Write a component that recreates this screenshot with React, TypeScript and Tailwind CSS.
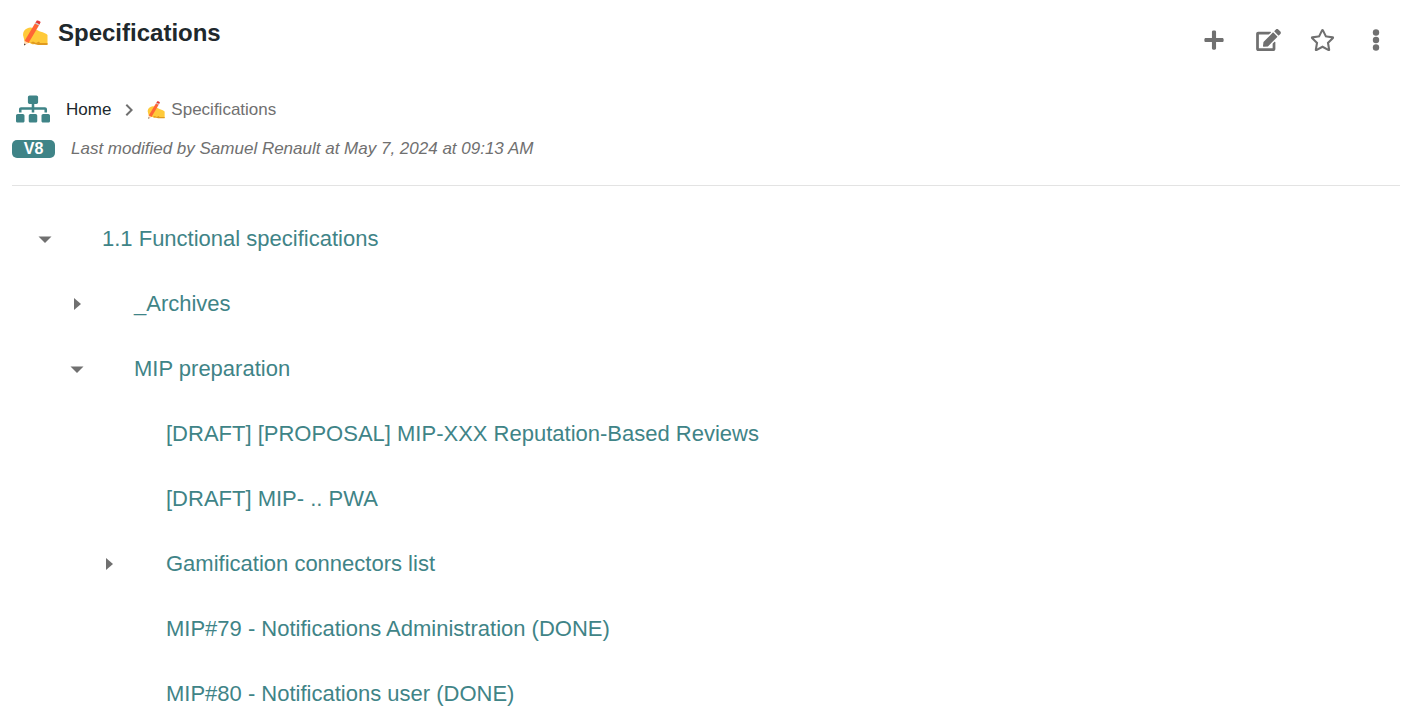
import React, { useState } from "react";
import { FaEdit, FaPlus, FaRegStar, FaSitemap } from "react-icons/fa";
import { MdChevronRight } from "react-icons/md";

type TreeNode = { label: string; children?: TreeNode[]; open?: boolean };

const tree: TreeNode[] = [
  {
    label: "1.1 Functional specifications",
    open: true,
    children: [
      { label: "_Archives", children: [] },
      {
        label: "MIP preparation",
        open: true,
        children: [
          { label: "[DRAFT] [PROPOSAL] MIP-XXX Reputation-Based Reviews" },
          { label: "[DRAFT] MIP- .. PWA" },
          { label: "Gamification connectors list", children: [] },
          { label: "MIP#79 - Notifications Administration (DONE)" },
          { label: "MIP#80 - Notifications user (DONE)" },
        ],
      },
    ],
  },
];

function WritingHand({ className }: { className: string }) {
  return (
    <svg viewBox="0 0 26 26" className={className} aria-hidden="true">
      <path d="M1 15Q1 10 5 8.500Q8 7 11 8L18 11.500Q24 13 25.500 15V24.500H17L14 23 11 24.500 8 23 3 23Z" fill="#ffca3a" />
      <path d="M8 23 11 21.500 14 23 17 21.500 18 23H25.500V25H16L12 24Z" fill="#e09a20" />
      <path d="M2.500 21 13.500 2.500 17.500 4.500 6.500 23Z" fill="#ff6535" />
      <path d="M13.500 2.500 14.800 .5Q17 0 18.700 2L17.500 4.500Z" fill="#e53935" />
      <path d="M13.500 2.500 17.500 4.500 16.900 5.600 12.900 3.500Z" fill="#c5d0d5" />
      <path d="M2.500 21 6.500 23 2 25.500Z" fill="#ffd9b3" />
      <path d="M2.200 23.500 3.800 24.400 2 25.500Z" fill="#37302c" />
    </svg>
  );
}

function IconButton({ label, children }: { label: string; children: React.ReactNode }) {
  return (
    <button type="button" aria-label={label} className="flex h-9 w-9 items-center justify-center">
      {children}
    </button>
  );
}

function TreeItem({ node }: { node: TreeNode }) {
  const [open, setOpen] = useState(Boolean(node.open));
  return (
    <li>
      <div className="flex h-[65px] items-center">
        {node.children ? (
          <button
            type="button"
            aria-label={(open ? "Collapse " : "Expand ") + node.label}
            aria-expanded={open}
            onClick={() => setOpen(!open)}
            className="flex h-6 w-6 items-center justify-center text-[#707070]"
          >
            <svg viewBox="0 0 24 24" className="h-6 w-6" fill="currentColor">
              {open ? <path d="M5.500 9.500H18.500L12 16Z" /> : <path d="M9 6V18L16 12Z" />}
            </svg>
          </button>
        ) : (
          <span className="w-6" />
        )}
        <a href="#" className="ml-[45px] text-[22px] leading-8 text-[#3f8487]">
          {node.label}
        </a>
      </div>
      {open && node.children && node.children.length > 0 && (
        <ul className="pl-8">
          {node.children.map((child) => (
            <TreeItem key={child.label} node={child} />
          ))}
        </ul>
      )}
    </li>
  );
}

export default function App() {
  return (
    <main className="h-screen overflow-hidden bg-white font-['Liberation_Sans',Arial,sans-serif] text-[#707070]">
      <header className="flex items-start justify-between pt-4 pr-4 pl-[22px]">
        <h1 className="flex items-center gap-[10px] text-2xl leading-[34px] font-bold text-[#20282c]">
          <WritingHand className="h-[26px] w-[26px]" />
          Specifications
        </h1>
        <div className="flex gap-[18px] pt-[6px]">
          <IconButton label="Add page">
            <FaPlus className="h-[22px] w-[22px]" />
          </IconButton>
          <IconButton label="Edit">
            <FaEdit className="h-[22px] w-[25px]" />
          </IconButton>
          <IconButton label="Add to favorites">
            <FaRegStar className="h-6 w-[25px]" />
          </IconButton>
          <IconButton label="More actions">
            <svg viewBox="0 0 8 24" className="h-6 w-2" fill="currentColor">
              <circle cx="4" cy="4.500" r="3.2" />
              <circle cx="4" cy="12" r="3.2" />
              <circle cx="4" cy="19.500" r="3.2" />
            </svg>
          </IconButton>
        </div>
      </header>

      <div className="mr-[10px] ml-3 border-b border-[#e3e3e3] pt-9 pb-6">
        <nav aria-label="Breadcrumb" className="flex h-8 items-center pl-1 text-[17px] leading-6">
          <button type="button" aria-label="Page tree" className="pb-[2px] text-[#3f8487]">
            <FaSitemap className="h-7 w-[34px]" />
          </button>
          <div className="ml-4 flex items-center">
            <a href="#" className="text-[#20282c]">
              Home
            </a>
            <MdChevronRight className="mx-[6px] h-6 w-6" />
            <WritingHand className="mr-[6px] h-[18px] w-[18px]" />
            <span>Specifications</span>
          </div>
        </nav>
        <div className="mt-[11px] flex h-6 items-center gap-4">
          <span className="flex h-[18px] w-[43px] items-center justify-center rounded-[5px] bg-[#3f8487] text-base leading-4 font-bold text-white">
            V8
          </span>
          <p className="text-[17px] leading-6 italic">Last modified by Samuel Renault at May 7, 2024 at 09:13 AM</p>
        </div>
      </div>

      <ul className="pt-5 pl-[33px]">
        {tree.map((node) => (
          <TreeItem key={node.label} node={node} />
        ))}
      </ul>
    </main>
  );
}
